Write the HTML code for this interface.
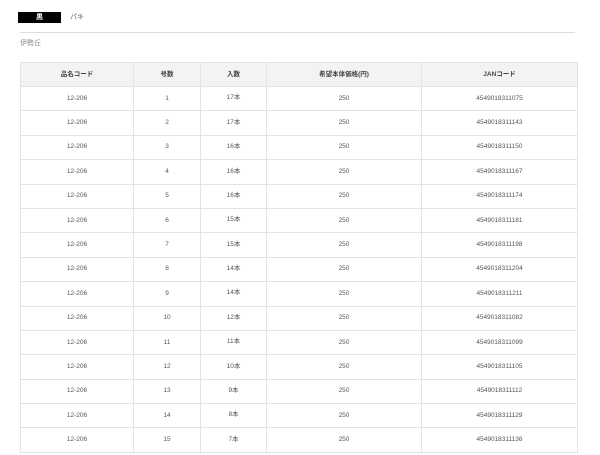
<!DOCTYPE html>
<html><head><meta charset="utf-8"><style>
body{margin:0;background:#fff;font-family:"Liberation Sans","Noto Sans CJK JP",sans-serif;color:#444;width:600px;height:455px;overflow:hidden;position:relative}
.badge{position:absolute;left:18px;top:12px;width:43px;height:11px;background:#000;color:#fff;font-size:7px;line-height:11px;text-align:center;font-weight:bold}
.t1{position:absolute;left:70px;top:12px;font-size:7px;line-height:11px;color:#666}
.hr{position:absolute;left:20px;top:32px;width:555px;height:1px;background:#ddd}
.sub{position:absolute;left:20px;top:38px;font-size:7px;color:#888}
table{position:absolute;left:20px;top:62px;width:557px;border-collapse:collapse;font-size:6.5px;color:#555;table-layout:fixed}
td,th{border:1px solid #e3e3e3;text-align:center;height:23.4px;padding:0;font-weight:normal;line-height:8px;vertical-align:middle}
td span{display:inline-block;height:8px;line-height:8px;vertical-align:middle}
th{background:#f3f3f3;height:23px;color:#444;font-weight:bold}
</style></head><body>
<div class="badge">黒</div><div class="t1">パキ</div>
<div class="hr"></div>
<div class="sub">伊勢丘</div>
<table>
<colgroup><col style="width:113px"><col style="width:67px"><col style="width:66px"><col style="width:155px"><col style="width:156px"></colgroup>
<tr><th>品名コード</th><th>号数</th><th>入数</th><th>希望本体価格(円)</th><th>JANコード</th></tr>
<tr><td>12-206</td><td>1</td><td><span>17本</span></td><td>250</td><td>4549018311075</td></tr>
<tr><td>12-206</td><td>2</td><td><span>17本</span></td><td>250</td><td>4549018311143</td></tr>
<tr><td>12-206</td><td>3</td><td><span>16本</span></td><td>250</td><td>4549018311150</td></tr>
<tr><td>12-206</td><td>4</td><td><span>16本</span></td><td>250</td><td>4549018311167</td></tr>
<tr><td>12-206</td><td>5</td><td><span>16本</span></td><td>250</td><td>4549018311174</td></tr>
<tr><td>12-206</td><td>6</td><td><span>15本</span></td><td>250</td><td>4549018311181</td></tr>
<tr><td>12-206</td><td>7</td><td><span>15本</span></td><td>250</td><td>4549018311198</td></tr>
<tr><td>12-206</td><td>8</td><td><span>14本</span></td><td>250</td><td>4549018311204</td></tr>
<tr><td>12-206</td><td>9</td><td><span>14本</span></td><td>250</td><td>4549018311211</td></tr>
<tr><td>12-206</td><td>10</td><td><span>12本</span></td><td>250</td><td>4549018311082</td></tr>
<tr><td>12-206</td><td>11</td><td><span>11本</span></td><td>250</td><td>4549018311099</td></tr>
<tr><td>12-206</td><td>12</td><td><span>10本</span></td><td>250</td><td>4549018311105</td></tr>
<tr><td>12-206</td><td>13</td><td><span>9本</span></td><td>250</td><td>4549018311112</td></tr>
<tr><td>12-206</td><td>14</td><td><span>8本</span></td><td>250</td><td>4549018311129</td></tr>
<tr><td>12-206</td><td>15</td><td><span>7本</span></td><td>250</td><td>4549018311136</td></tr>
</table>
</body></html>
